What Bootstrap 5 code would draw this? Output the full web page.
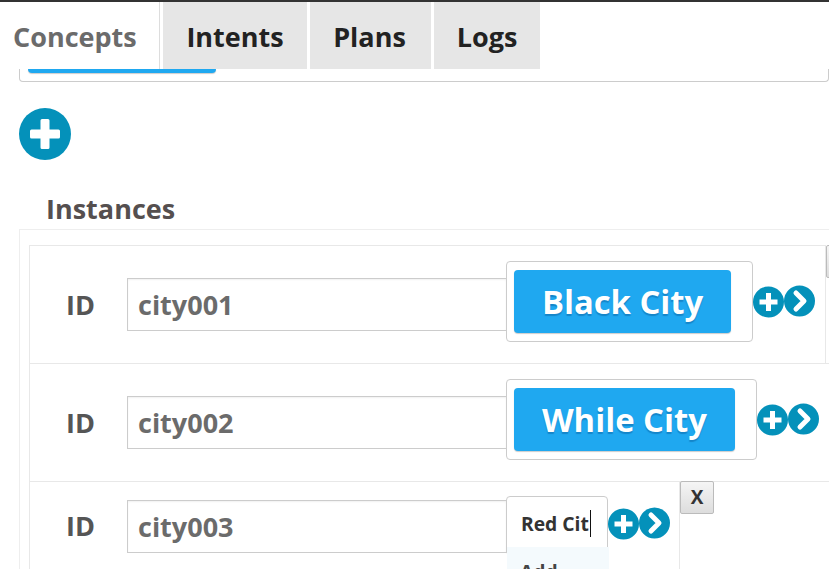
<!DOCTYPE html>
<html lang="en"><head><meta charset="utf-8"><title>Concepts</title>
<link rel="stylesheet" href="https://cdn.jsdelivr.net/npm/bootstrap@5.3.0/dist/css/bootstrap.min.css">
<style>
html,body{height:569px;overflow:hidden}
body{font-family:"Open Sans","Liberation Sans",sans-serif;font-weight:700;border-top:2px solid #333;color:#555;background:#fff}
.tabbar{height:67px;gap:3px;flex-wrap:nowrap}
.tabbar .nav-link{height:67px;display:flex;align-items:center;justify-content:center;border-radius:0;background:#e6e6e6;color:#222;font-size:27px;padding:3px 0 0}
.tabbar .nav-link.active{background:#fff;color:#6b6b6b;border-right:1px solid #ddd;width:160px;justify-content:flex-start;padding-left:13px}
.t-intents{width:144px}.tabbar .t-plans{width:121px;padding-right:2px}.t-logs{width:106px}
.cutcard{margin-left:19px;height:13px;border:1px solid #ccc;border-top:0;border-radius:0 0 4px 4px}
.cutbtn{margin-left:8px;width:188px;height:4px;background:#1fa8f0;border-radius:0 0 4px 4px;box-shadow:0 1px 1px #ccc}
.bigplus{display:block;margin:26px 0 0 19px}
.heading{font-size:27px;line-height:36px;margin:31px 0 0 46px;font-weight:700;color:#554f4f}
.panel{margin:2px 0 0 19px;border:1px solid #eee;border-right:0;border-bottom:0;padding:16px 0 0 9px;width:1000px}
.rowline{width:fit-content}
.rowbox{border:1px solid #e8e8e8;padding:14px 10px 21px 36px;margin-top:-1px;height:119px}
.idlabel{font-size:27px;width:61px;color:#555;line-height:32px;flex:none}
.idinput.form-control{width:380px;height:53px;border:1px solid #ccc;border-radius:0;font-size:27px;font-weight:700;color:#6b6b6b;padding:0 10px;box-shadow:inset 0 1px 2px rgba(0,0,0,.06);flex:none}
.tagbox{border:1px solid #ccc;border-radius:4px;padding:8px 21px 8px 7px;height:81px;position:relative;margin-left:-1px;flex:none}
.tagbtn.btn{height:63px;background:#1fa8f0;border:0;border-radius:4px;color:#fff;font-size:32.8px;font-weight:700;padding:0 27.9px;line-height:63px;text-shadow:0 2px 1px rgba(0,70,130,.35);box-shadow:0 1px 1px #ccc;white-space:nowrap;--bs-btn-hover-bg:#1fa8f0;--bs-btn-hover-color:#fff}
.tagbox.typing{width:102px;height:59px;padding:14px 0 0 14px;font-size:19.3px;color:#333;line-height:26px;white-space:nowrap}
.caretmark{border-right:1px solid #111;padding-right:1px}
.suggest{position:absolute;left:0;top:50px;width:102px;height:60px;background:#f4fafd;padding:12px 13px;font-size:19.3px;color:#444}
.icons{flex:none}
.icons svg{display:block}
.icons svg + svg{margin-top:-1px}
.icons.rowmid{margin-top:1px}
.closebtn.btn{width:34px;height:33px;padding:0;border:1px solid #bbb;border-radius:2px;background:linear-gradient(#f5f5f5,#ddd);font-size:19px;font-weight:700;color:#333;line-height:31px;flex:none;margin-top:-1px}
.wrap-input{margin-top:6px}
.idlabel.wrap-input{margin-top:8px}
.typing-row.rowbox{height:150px;padding-right:9px}
.idlabel.low{margin-top:14px}
.idinput.low{margin-top:4px}
.icons.low{margin-top:12px}
</style></head>
<body>
<ul class="nav tabbar">
 <li class="nav-item"><a class="nav-link active" href="#">Concepts</a></li>
 <li class="nav-item"><a class="nav-link t-intents" href="#">Intents</a></li>
 <li class="nav-item"><a class="nav-link t-plans" href="#">Plans</a></li>
 <li class="nav-item"><a class="nav-link t-logs" href="#">Logs</a></li>
</ul>
<div class="cutcard"><div class="cutbtn"></div></div>
<svg class="bigplus" width="52" height="52" viewBox="0 0 52 52"><circle cx="26" cy="26" r="26" fill="#0491ba"/><path d="M23 11h6a1.500 1.500 0 0 1 1.500 1.500V21.500H39.500A1.500 1.500 0 0 1 41 23v6a1.500 1.500 0 0 1-1.500 1.500H30.500V39.500A1.500 1.500 0 0 1 29 41h-6a1.500 1.500 0 0 1-1.500-1.500V30.500H12.500A1.500 1.500 0 0 1 11 29v-6a1.500 1.500 0 0 1 1.500-1.500H21.500V12.500A1.500 1.500 0 0 1 23 11z" fill="#fff"/></svg>
<h2 class="heading">Instances</h2>
<div class="panel">
 <div class="rowline d-flex align-items-start">
  <div class="rowbox d-flex align-items-center">
   <span class="idlabel wrap-input">ID</span>
   <input class="form-control idinput wrap-input" value="city001">
   <div class="tagbox"><button class="btn tagbtn">Black City</button></div>
   <div class="icons rowmid d-flex">
    <svg width="31" height="32" viewBox="0 0 31 32"><circle cx="15.500" cy="16" r="15.500" fill="#0491ba"/><path d="M13 7h5v6.500h6.500v5H18V25h-5v-6.500H6.500v-5H13z" fill="#fff"/></svg>
    <svg width="31" height="32" viewBox="0 0 31 32"><circle cx="15.500" cy="16" r="15.500" fill="#0491ba"/><path d="M12 8l8 8-8 8" fill="none" stroke="#fff" stroke-width="5" stroke-linecap="round" stroke-linejoin="round"/></svg>
   </div>
  </div>
  <button class="btn closebtn">X</button>
 </div>
 <div class="rowline d-flex align-items-start">
  <div class="rowbox d-flex align-items-center">
   <span class="idlabel wrap-input">ID</span>
   <input class="form-control idinput wrap-input" value="city002">
   <div class="tagbox"><button class="btn tagbtn">While City</button></div>
   <div class="icons rowmid d-flex">
    <svg width="31" height="32" viewBox="0 0 31 32"><circle cx="15.500" cy="16" r="15.500" fill="#0491ba"/><path d="M13 7h5v6.500h6.500v5H18V25h-5v-6.500H6.500v-5H13z" fill="#fff"/></svg>
    <svg width="31" height="32" viewBox="0 0 31 32"><circle cx="15.500" cy="16" r="15.500" fill="#0491ba"/><path d="M12 8l8 8-8 8" fill="none" stroke="#fff" stroke-width="5" stroke-linecap="round" stroke-linejoin="round"/></svg>
   </div>
  </div>
  <button class="btn closebtn">X</button>
 </div>
 <div class="rowline d-flex align-items-start">
  <div class="rowbox typing-row d-flex align-items-start">
   <span class="idlabel low">ID</span>
   <input class="form-control idinput low" value="city003">
   <div class="tagbox typing"><span class="caretmark">Red Cit</span><div class="suggest">Add</div></div>
   <div class="icons low d-flex">
    <svg width="31" height="32" viewBox="0 0 31 32"><circle cx="15.500" cy="16" r="15.500" fill="#0491ba"/><path d="M13 7h5v6.500h6.500v5H18V25h-5v-6.500H6.500v-5H13z" fill="#fff"/></svg>
    <svg width="31" height="32" viewBox="0 0 31 32"><circle cx="15.500" cy="16" r="15.500" fill="#0491ba"/><path d="M12 8l8 8-8 8" fill="none" stroke="#fff" stroke-width="5" stroke-linecap="round" stroke-linejoin="round"/></svg>
   </div>
  </div>
  <button class="btn closebtn">X</button>
 </div>
</div>
<script src="https://cdn.jsdelivr.net/npm/bootstrap@5.3.0/dist/js/bootstrap.bundle.min.js"></script>
</body></html>
